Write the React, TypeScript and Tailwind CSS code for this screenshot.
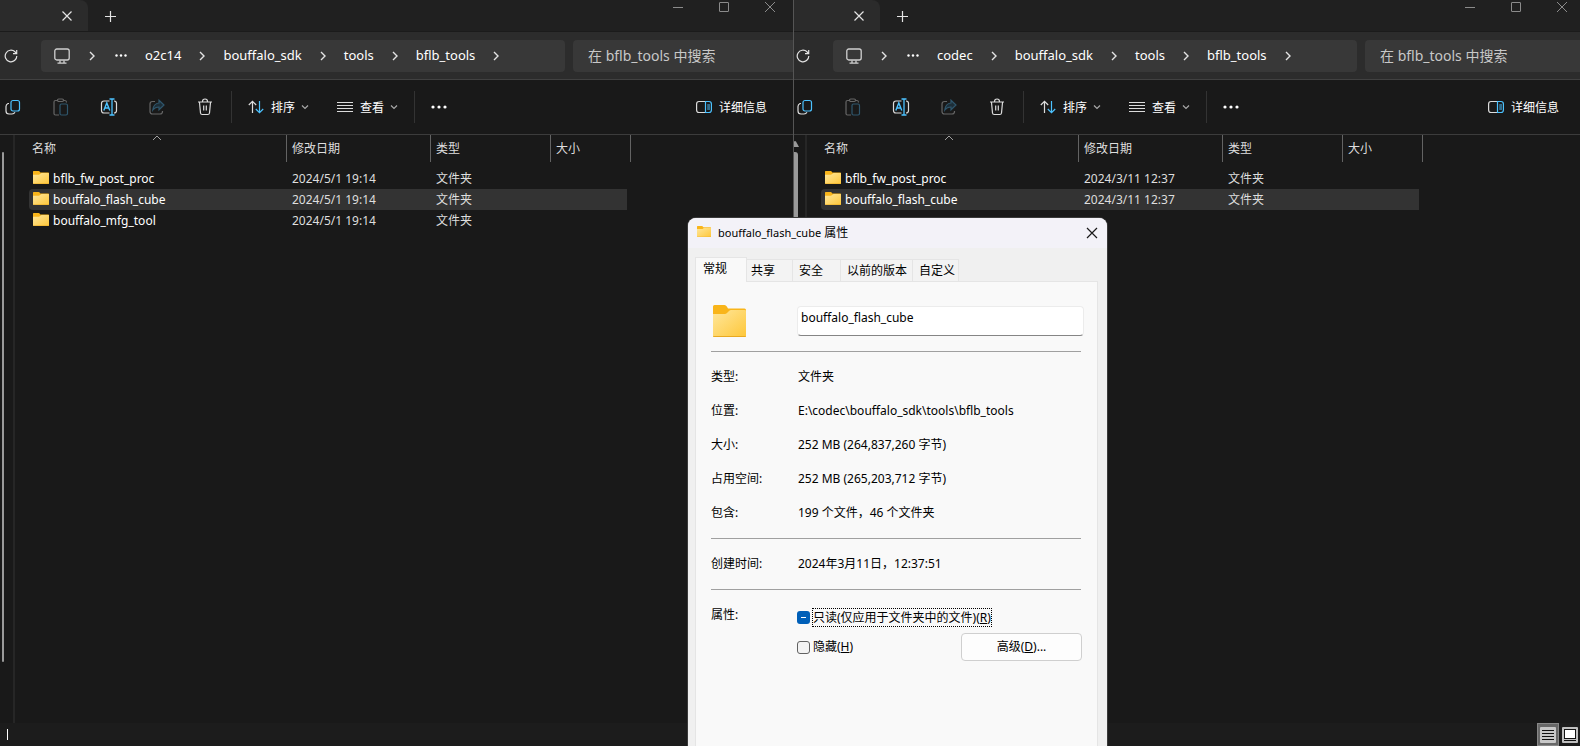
import React, { useEffect, useRef } from "react";

type FileRow = { name: string; date: string; selected?: boolean };

const font = "font-['Noto_Sans','Noto_Sans_CJK_SC',sans-serif]";

function Chevron() {
  return (
    <svg width="8" height="10" viewBox="0 0 8 10" fill="none" stroke="#e4e4e4" strokeWidth="1.4" className="shrink-0">
      <path d="M2 1l4 4-4 4" />
    </svg>
  );
}

function ChevronDown() {
  return (
    <svg width="8" height="8" viewBox="0 0 8 8" fill="none" stroke="#a8a8a8" strokeWidth="1.2">
      <path d="M1 2.500l3 3 3-3" />
    </svg>
  );
}

function Folder({ className }: { className: string }) {
  return (
    <svg viewBox="0 0 33 32" preserveAspectRatio="none" className={className} aria-hidden="true">
      <defs>
        <linearGradient id="folder-face" x1="0" y1="0" x2="1" y2="1">
          <stop offset="0" stopColor="#ffe79c" />
          <stop offset="1" stopColor="#fec73a" />
        </linearGradient>
      </defs>
      <path d="M0 1.500q0-1.500 1.500-1.500h10q1.500 0 2.300 1.500L15 3.500h16.500q1.500 0 1.500 1.500v6H0z" fill="#f9b51a" />
      <path d="M0 9h12q1 0 2-1l2-2q1-1 2-1h14q1 0 1 1v25q0 1-1 1H1q-1 0-1-1z" fill="url(#folder-face)" />
      <path d="M0 31q0 1 1 1h31q1 0 1-1z" fill="#e9a921" />
    </svg>
  );
}

function CopyIcon() {
  return (
    <svg width="16" height="16" viewBox="0 0 16 16" fill="none" strokeWidth="1.2">
      <path d="M4 4.500H3q-2 1-2 3V12q0 3 3 3h3q2 0 3-1.800" stroke="#dcdcdc" />
      <rect x="6" y="1.500" width="8.500" height="10.500" rx="2" stroke="#4cc2ff" />
    </svg>
  );
}

function PasteIcon() {
  return (
    <svg width="16" height="18" viewBox="0 0 16 18" fill="none" strokeWidth="1.200">
      <path d="M4.500 2.500H2.500q-1.500 0-1.500 1.500v11.500q0 1.500 1.500 1.500H6M10.500 2.500h1.500q1.500 0 1.500 2" stroke="#666" />
      <rect x="4.500" y="1" width="6" height="2.500" rx="1.200" stroke="#666" />
      <rect x="7" y="6" width="7.500" height="11" rx="1.500" stroke="#2f566c" />
    </svg>
  );
}

function RenameIcon() {
  return (
    <svg width="18" height="18" viewBox="0 0 18 18" fill="none" strokeWidth="1.200">
      <path d="M9.500 3H4Q1.500 3 1.500 5.500v7Q1.500 15 4 15h5.500M14 3q2.500 0 2.500 2.500v7Q16.500 15 14 15" stroke="#dcdcdc" />
      <path d="M3.800 12.500l3-7.500 3 7.500M4.800 10h4" stroke="#4cc2ff" strokeWidth="1.400" />
      <path d="M12 1v16M9.500 1h5M9.500 17h5" stroke="#4cc2ff" strokeWidth="1.300" />
    </svg>
  );
}

function ShareIcon() {
  return (
    <svg width="16" height="16" viewBox="0 0 16 16" fill="none" strokeWidth="1.200">
      <path d="M6 2.500H3.500Q1 2.500 1 5v7.500Q1 15 3.500 15H11q2.500 0 2.500-2.500V12" stroke="#666" />
      <path d="M10 1.200L15 6l-5 4.800V8q-4 0-6.200 3Q4.500 4.500 10 4z" stroke="#2f566c" fill="#1d2e38" />
    </svg>
  );
}

function TrashIcon() {
  return (
    <svg width="16" height="18" viewBox="0 0 16 18" fill="none" stroke="#dcdcdc" strokeWidth="1.200">
      <path d="M1 4h14M5.500 3.500q0-2.500 2.500-2.500t2.500 2.500M2.500 4.500l1 10.500q.2 1.500 1.700 1.500h5.600q1.500 0 1.700-1.500l1-10.500M6.700 7.500v5M9.300 7.500v5" />
    </svg>
  );
}

function SortIcon() {
  return (
    <svg width="16" height="14" viewBox="0 0 16 14" fill="none" strokeWidth="1.200">
      <path d="M4.500 13V1.500M.8 5l3.700-3.700L8.200 5" stroke="#dcdcdc" />
      <path d="M11.500 1v11.500M7.800 9l3.700 3.700L15.200 9" stroke="#4cc2ff" />
    </svg>
  );
}

function ViewIcon() {
  return (
    <svg width="16" height="12" viewBox="0 0 16 12" stroke="#dcdcdc">
      <path d="M0 1.500h16M0 4.500h16M0 7.500h16M0 10.500h16" />
    </svg>
  );
}

function DetailsIcon() {
  return (
    <svg width="16" height="14" viewBox="0 0 16 14" fill="none" strokeWidth="1.200">
      <path d="M9.500 1.500H3Q.6 1.500.6 4v6q0 2.500 2.400 2.500h6.500" stroke="#dcdcdc" />
      <path d="M9.500 1.500H13q2.400 0 2.400 2.500v6q0 2.500-2.400 2.500H9.500zM11.200 5H14M11.200 7H14M11.200 9H14" stroke="#4cc2ff" />
    </svg>
  );
}

function Dots({ className }: { className?: string }) {
  return (
    <svg width="16" height="4" viewBox="0 0 16 4" fill="#fff" className={className}>
      <circle cx="2" cy="2" r="1.600" />
      <circle cx="8" cy="2" r="1.600" />
      <circle cx="14" cy="2" r="1.600" />
    </svg>
  );
}

function TitleBar() {
  return (
    <div className="flex h-8 shrink-0 border-b border-[#1b1b1b] bg-[#202020]">
      <div className="flex w-[88px] items-center justify-end rounded-tr-lg bg-[#2b2b2b] pr-[15px]">
        <button aria-label="Close tab">
          <svg width="12" height="12" viewBox="0 0 12 12" stroke="#e4e4e4" strokeWidth="1.200">
            <path d="M1.500 1.500l9 9M10.500 1.500l-9 9" />
          </svg>
        </button>
      </div>
      <button aria-label="New tab" className="ml-4 mt-px">
        <svg width="13" height="13" viewBox="0 0 13 13" stroke="#e4e4e4" strokeWidth="1.200">
          <path d="M6.500 1v11M1 6.500h11" />
        </svg>
      </button>
      <div className="ml-auto flex h-[14px] items-center gap-9 pr-[18px]">
        <button aria-label="Minimize">
          <svg width="10" height="10" viewBox="0 0 10 10" stroke="#8b8b8b">
            <path d="M0 5.500h10" />
          </svg>
        </button>
        <button aria-label="Maximize">
          <svg width="10" height="10" viewBox="0 0 10 10" stroke="#8b8b8b" fill="none">
            <rect x=".5" y=".5" width="9" height="9" rx=".3" />
          </svg>
        </button>
        <button aria-label="Close">
          <svg width="10" height="10" viewBox="0 0 10 10" stroke="#8b8b8b">
            <path d="M0 0l10 10M10 0L0 10" />
          </svg>
        </button>
      </div>
    </div>
  );
}

function NavBar({ root }: { root: string }) {
  const parts = [root, "bouffalo_sdk", "tools", "bflb_tools"];
  return (
    <div className="flex h-12 shrink-0 items-center border-b border-[#414141] bg-[#2c2c2c]">
      <button aria-label="Refresh" className="ml-1 shrink-0">
        <svg width="14" height="14" viewBox="0 0 14 14" fill="none" stroke="#e4e4e4" strokeWidth="1.200">
          <path d="M12.800 7A5.800 5.800 0 1 1 11 2.800L12.500 4.500M12.700 1v3.700H9" />
        </svg>
      </button>
      <nav className="ml-[23px] flex h-8 min-w-0 flex-1 items-center rounded bg-[#383838] pl-[13px] text-[13px] text-white">
        <svg width="16" height="16" viewBox="0 0 16 16" fill="none" stroke="#d0d0d0" strokeWidth="1.300" className="shrink-0">
          <rect x=".8" y="1" width="14.400" height="11" rx="2" />
          <path d="M6 12.500v2.500M10 12.500v2.500M3.500 15.200h9" />
        </svg>
        <span className="ml-[18px]">
          <Chevron />
        </span>
        <Dots className="ml-[19px] mr-[18px] h-[3px] w-3 shrink-0" />
        {parts.map((p) => (
          <React.Fragment key={p}>
            <a href="#" className="whitespace-nowrap pt-px">
              {p}
            </a>
            <span className="mx-[17px]">
              <Chevron />
            </span>
          </React.Fragment>
        ))}
      </nav>
      <input
        aria-label="搜索"
        placeholder="在 bflb_tools 中搜索"
        className="ml-2 h-8 w-[220px] rounded-l bg-[#383838] pl-[15px] text-[14px] text-white outline-none placeholder:text-[#c8c8c8]"
      />
    </div>
  );
}

function ToolBar() {
  const icons = [
    { label: "复制", icon: <CopyIcon /> },
    { label: "粘贴", icon: <PasteIcon /> },
    { label: "重命名", icon: <RenameIcon /> },
    { label: "共享", icon: <ShareIcon /> },
    { label: "删除", icon: <TrashIcon /> },
  ];
  return (
    <div className="flex h-[55px] shrink-0 items-center border-b border-[#3c3c3c] bg-[#191919] text-[12px] text-white">
      <div className="-ml-[11px] flex">
        {icons.map((i) => (
          <button key={i.label} aria-label={i.label} className="flex h-10 w-12 items-center justify-center">
            {i.icon}
          </button>
        ))}
      </div>
      <div className="ml-0.5 h-8 w-px bg-[#333]" />
      <button className="ml-4 flex items-center gap-[7px]">
        <SortIcon />
        <span className="pt-0.5">排序</span>
        <span className="-ml-px">
          <ChevronDown />
        </span>
      </button>
      <button className="ml-7 flex items-center gap-[7px]">
        <ViewIcon />
        <span className="pt-0.5">查看</span>
        <span className="-ml-px">
          <ChevronDown />
        </span>
      </button>
      <div className="ml-4 h-8 w-px bg-[#333]" />
      <button aria-label="更多" className="ml-4">
        <Dots />
      </button>
      <button className="ml-auto mr-[26px] flex items-center gap-[7px]">
        <DetailsIcon />
        <span className="pt-0.5">详细信息</span>
      </button>
    </div>
  );
}

function FileTable({ rows }: { rows: FileRow[] }) {
  return (
    <table className="ml-[14px] h-fit w-[602px] table-fixed border-separate border-spacing-0 text-left text-[12px] leading-[21px] text-[#dedede]">
      <colgroup>
        <col className="w-[258px]" />
        <col className="w-[144px]" />
        <col className="w-[120px]" />
        <col className="w-[80px]" />
      </colgroup>
      <thead>
        <tr>
          <th className="relative h-[27px] border-r border-[#636363] p-0 pl-[3px] font-normal">
            名称
            <svg width="10" height="6" viewBox="0 0 10 6" fill="none" stroke="#a0a0a0" className="absolute left-[123px] top-0">
              <path d="M1 5l4-4 4 4" />
            </svg>
          </th>
          <th className="border-r border-[#636363] p-0 pl-[5px] font-normal">修改日期</th>
          <th className="border-r border-[#636363] p-0 pl-[5px] font-normal">类型</th>
          <th className="border-r border-[#636363] p-0 pl-[5px] font-normal">大小</th>
        </tr>
        <tr>
          <td colSpan={4} className="h-[6px] p-0" />
        </tr>
      </thead>
      <tbody>
        {rows.map((r) => {
          const bg = r.selected ? "bg-[#333333]" : "";
          return (
            <tr key={r.name}>
              <td className={`h-[21px] rounded-l-sm p-0 ${bg}`}>
                <span className="flex items-start gap-1 pl-1 text-white">
                  <Folder className="mt-[3px] h-[13px] w-4" />
                  {r.name}
                </span>
              </td>
              <td className={`p-0 pl-[5px] ${bg}`}>{r.date}</td>
              <td className={`p-0 pl-[5px] ${bg}`}>文件夹</td>
              <td className={`border-r-4 border-transparent bg-clip-padding p-0 ${bg}`} />
            </tr>
          );
        })}
      </tbody>
    </table>
  );
}

function Explorer({ root, rows, rail, status }: { root: string; rows: FileRow[]; rail: React.ReactNode; status: React.ReactNode }) {
  return (
    <div className="flex min-h-0 flex-1 flex-col">
      <TitleBar />
      <NavBar root={root} />
      <ToolBar />
      <div className="flex min-h-0 flex-1 bg-[#191919]">
        <div className="w-[15px] shrink-0 border-r-2 border-[#262626]">{rail}</div>
        <FileTable rows={rows} />
      </div>
      <div className="flex h-[23px] shrink-0 items-center bg-[#1c1c1c]">{status}</div>
    </div>
  );
}

function Field({ label, children }: { label: string; children: React.ReactNode }) {
  return (
    <div className="flex h-[34px] items-center">
      <dt className="w-[87px] shrink-0">{label}</dt>
      <dd>{children}</dd>
    </div>
  );
}

function PropertiesDialog() {
  const readOnly = useRef<HTMLInputElement>(null);
  useEffect(() => {
    if (readOnly.current) readOnly.current.indeterminate = true;
  }, []);
  const rule = "mr-4 border-t border-[#a0a0a0]";
  return (
    <section
      role="dialog"
      aria-label="bouffalo_flash_cube 属性"
      className="absolute bottom-0 left-[688px] top-[218px] flex w-[419px] flex-col rounded-t-lg bg-[#f0f0f0] text-[12px] text-black shadow-[0_0_0_1px_#3a3a3a]"
    >
      <header className="flex h-[30px] shrink-0 items-center rounded-t-lg bg-[#f3f2f8] pl-[9px] pr-[9px]">
        <Folder className="mb-1 h-[11px] w-[14px]" />
        <h1 className="ml-[7px]">
          <span className="text-[11px]">bouffalo_flash_cube</span> 属性
        </h1>
        <button aria-label="Close" className="ml-auto">
          <svg width="12" height="12" viewBox="0 0 12 12" stroke="#1a1a1a" strokeWidth="1.200">
            <path d="M1 1l10 10M11 1L1 11" />
          </svg>
        </button>
      </header>
      <div role="tablist" className="relative z-10 mx-[7px] -mb-px mt-[9px] flex h-[25px] shrink-0 items-end">
        <button role="tab" aria-selected="true" className="h-[25px] w-[52px] border border-b-0 border-[#e5e5e5] bg-[#f9f9f9] pb-0.5 pl-[7px] text-left">
          常规
        </button>
        <button role="tab" className="h-[23px] w-[46px] border border-l-0 border-[#e5e5e5] bg-[#f3f3f3] pl-1 text-left">
          共享
        </button>
        <button role="tab" className="h-[23px] w-12 border border-l-0 border-[#e5e5e5] bg-[#f3f3f3] pl-1.5 text-left">
          安全
        </button>
        <button role="tab" className="h-[23px] w-[72px] whitespace-nowrap border border-l-0 border-[#e5e5e5] bg-[#f3f3f3] pl-1.5 text-left">
          以前的版本
        </button>
        <button role="tab" className="h-[23px] w-[46px] whitespace-nowrap border border-l-0 border-[#e5e5e5] bg-[#f3f3f3] pl-1.5 text-left">
          自定义
        </button>
      </div>
      <div className="ml-[7px] mr-[9px] min-h-0 flex-1 overflow-hidden border border-b-0 border-[#e5e5e5] bg-[#f9f9f9] pl-[15px]">
        <div className="flex h-[69px] items-center pt-2">
          <Folder className="ml-0.5 h-8 w-[33px]" />
          <input
            aria-label="名称"
            defaultValue="bouffalo_flash_cube"
            className="ml-[51px] mr-[13px] h-[30px] min-w-0 flex-1 rounded-sm border border-b-[#858585] border-l-[#ececec] border-r-[#ececec] border-t-[#ececec] bg-white pb-1.5 pl-[3px] outline-none"
          />
        </div>
        <dl>
          <div className={`${rule} mb-2`} />
          <Field label="类型:">文件夹</Field>
          <Field label="位置:">E:\codec\bouffalo_sdk\tools\bflb_tools</Field>
          <Field label="大小:">252 MB (264,837,260 字节)</Field>
          <Field label="占用空间:">252 MB (265,203,712 字节)</Field>
          <Field label="包含:">199 个文件，46 个文件夹</Field>
          <div className={`${rule} mb-2 mt-2`} />
          <Field label="创建时间:">2024年3月11日，12:37:51</Field>
          <div className={`${rule} mb-2 mt-2`} />
        </dl>
        <div className="flex">
          <span className="flex h-[34px] w-[86px] shrink-0 items-center">属性:</span>
          <div className="flex flex-1 flex-col pr-[15px]">
            <div className="mt-2.5 flex h-[19px] items-center gap-0.5">
              <span className="grid">
                <input
                  ref={readOnly}
                  id="read-only"
                  type="checkbox"
                  className="col-start-1 row-start-1 h-[13px] w-[13px] appearance-none rounded-[3px] bg-[#005fb8]"
                />
                <span className="pointer-events-none col-start-1 row-start-1 h-px w-[5px] place-self-center bg-white" />
              </span>
              <label htmlFor="read-only" className="whitespace-nowrap border border-dotted border-black leading-[17px]">
                只读(仅应用于文件夹中的文件)(<u>R</u>)
              </label>
            </div>
            <div className="mt-[6px] flex h-7 items-center">
              <input id="hidden" type="checkbox" className="mr-[3px] h-[13px] w-[13px] appearance-none rounded-[3px] border border-[#626262] bg-[#f3f3f3]" />
              <label htmlFor="hidden">
                隐藏(<u>H</u>)
              </label>
              <button className="ml-auto h-7 w-[121px] rounded border border-[#cfcfcf] bg-[#fdfdfd]">
                高级(<u>D</u>)...
              </button>
            </div>
          </div>
        </div>
      </div>
    </section>
  );
}

export default function App() {
  return (
    <main className={`relative grid h-screen min-h-[600px] grid-cols-[793fr_787fr] overflow-hidden bg-[#191919] ${font}`}>
      <div className="flex min-w-0 flex-col overflow-hidden">
        <Explorer
          root="o2c14"
          rows={[
            { name: "bflb_fw_post_proc", date: "2024/5/1 19:14" },
            { name: "bouffalo_flash_cube", date: "2024/5/1 19:14", selected: true },
            { name: "bouffalo_mfg_tool", date: "2024/5/1 19:14" },
          ]}
          rail={
            <div className="flex h-full flex-col pb-[61px] pl-0.5 pt-[17px]">
              <div className="w-0.5 flex-1 rounded bg-[#9a9a9a]" />
            </div>
          }
          status={<span className="ml-[7px] h-[11px] w-px bg-white" />}
        />
      </div>
      <div className="flex min-w-0 overflow-hidden border-l border-[#555]">
        <div className="-ml-0.5 -mr-[5px] flex min-w-0 flex-1 flex-col">
          <Explorer
            root="codec"
            rows={[
              { name: "bflb_fw_post_proc", date: "2024/3/11 12:37" },
              { name: "bouffalo_flash_cube", date: "2024/3/11 12:37", selected: true },
            ]}
            rail={
              <div className="flex h-full flex-col pb-[61px] pt-1.5">
                <svg width="7" height="6" viewBox="0 0 7 6" className="mb-[5px] shrink-0" fill="#9a9a9a">
                  <path d="M0 6h7L4 .5q-1-.8-2 0z" />
                </svg>
                <div className="w-1.5 flex-1 rounded bg-[#9a9a9a]" />
              </div>
            }
            status={
              <div className="ml-auto mr-[7px] flex items-center gap-[3px]">
                <button aria-label="列表" className="flex h-[23px] w-[22px] items-end justify-center border border-[#888] bg-[#686868] pb-0.5">
                  <svg width="16" height="16" viewBox="0 0 16 16">
                    <rect width="16" height="16" rx="1" fill="#c8c8c8" />
                    <path d="M2 3.500h12M2 6.500h12M2 9.500h12M2 12.500h12" stroke="#111" />
                  </svg>
                </button>
                <button aria-label="缩略图">
                  <svg width="16" height="16" viewBox="0 0 16 16">
                    <rect width="16" height="16" rx="1" fill="#c0c0c0" />
                    <rect x="2.500" y="2.500" width="11" height="9" fill="#fff" stroke="#111" />
                    <path d="M2 13.500h12" stroke="#111" />
                  </svg>
                </button>
              </div>
            }
          />
        </div>
      </div>
      <PropertiesDialog />
    </main>
  );
}
